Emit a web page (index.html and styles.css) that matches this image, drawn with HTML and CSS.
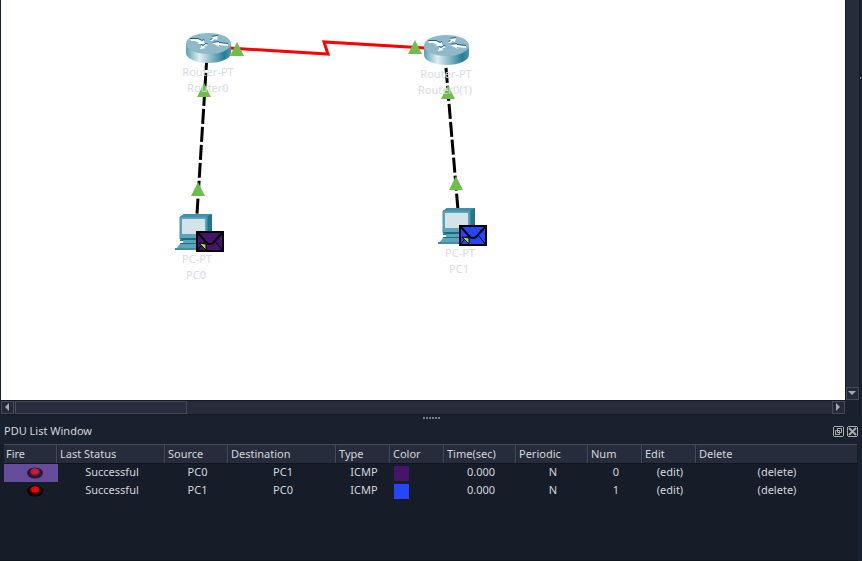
FILE: index.html
```html
<!DOCTYPE html>
<html lang="en">
<head>
<meta charset="utf-8">
<title>PDU List Window</title>
<link rel="stylesheet" href="styles.css">
</head>
<body>
<main class="workspace">
  <svg class="topology" role="img" aria-label="Network topology">
    <defs>
      <linearGradient id="side" x1="0" x2="1" y1="0" y2="0">
        <stop offset="0" stop-color="#58a0b5"/>
        <stop offset=".3" stop-color="#e2eef1"/>
        <stop offset=".5" stop-color="#9dc6d2"/>
        <stop offset=".85" stop-color="#257f98"/>
        <stop offset="1" stop-color="#4b96ac"/>
      </linearGradient>
      <g id="arrows">
        <path d="M4 6h8l4 2 2-1 1 4h-8l2-1-4-2H5z"/>
        <path d="M24 8l3-3-2-1 7-1-1 4-2-1-3 2z"/>
        <path d="M22 12l-4 2 2 1-6 1 1-4 2 1 3-2z"/>
        <path d="M42 13l-9-1 1 2-8-4 7-1v1l9 1z"/>
      </g>
      <g id="router">
        <path d="M0 10v10c0 5.500 10 10 22.500 10S45 25.500 45 20V10z" fill="url(#side)"/>
        <ellipse cx="22.500" cy="10.500" rx="22.500" ry="10.500" fill="#8fb9c9"/>
        <use href="#arrows" y="-1" fill="#0d627d"/>
        <use href="#arrows" fill="#fff"/>
      </g>
      <g id="pc">
        <path d="M5 3l4-3h28v23l-5 4H5z" fill="#21768f"/>
        <path d="M5 3l4-3h28l-5 3z" fill="#3f91a8"/>
        <path d="M5 3h27v22H5z" fill="#5fa5b9" stroke="#4a93a9" stroke-width="1"/>
        <rect x="7" y="5" width="23" height="15" rx="1" fill="#d4e3ea"/>
        <path d="M5 24h28v2H8z" fill="#146d87"/>
        <path d="M8 26h24v3H8z" fill="#5fa5b9"/>
        <path d="M5 29h28v2H5z" fill="#17718b"/>
        <path d="M5 30h28v6H0z" fill="#5fa5b9"/>
        <path d="M0 34h24v2H0z" fill="#438da4"/>
      </g>
      <g id="envelope">
        <rect x="1" y="1" width="26" height="19" stroke="#000" stroke-width="2"/>
        <path d="M1 1l10 11q3 2 6 0L27 1" fill="none" stroke="#000" stroke-width="2"/>
        <path d="M1 20l8-10M27 20l-8-10" fill="none" stroke="#000" stroke-width="1"/>
        <path d="M3 12l7 1v6z" fill="#b4d52b" stroke="#000" stroke-width="1"/>
      </g>
      <path id="link-up" d="M0 14L7 0l7 14z" fill="#6cbf4b"/>
    </defs>
    <path class="serial" d="M228 48l99 6-4-12 101 6"/>
    <path class="cross" d="M206 55L196 214"/>
    <path class="cross" d="M445 68L457 210"/>
    <use href="#router" x="185" y="33"/>
    <use href="#router" x="423" y="35"/>
    <use href="#pc" x="174" y="214"/>
    <use href="#pc" x="437" y="208"/>
    <use href="#link-up" x="229" y="42"/>
    <use href="#link-up" x="407" y="40"/>
    <use href="#link-up" x="196" y="83"/>
    <use href="#link-up" x="440" y="85"/>
    <use href="#link-up" x="190" y="182"/>
    <use href="#link-up" x="448" y="176"/>
    <use href="#envelope" x="195" y="231" fill="#46146b"/>
    <use href="#envelope" x="458" y="225" fill="#2446ff"/>
    <g class="labels">
      <text x="207" y="76">Router-PT</text><text x="207" y="92">Router0</text>
      <text x="445" y="78">Router-PT</text><text x="444" y="94">Router0(1)</text>
      <text x="196" y="263">PC-PT</text><text x="195" y="279">PC0</text>
      <text x="459" y="257">PC-PT</text><text x="458" y="273">PC1</text>
    </g>
  </svg>
  <div class="vbar">
    <button class="step" aria-label="Scroll down"><svg width="9" height="5"><path d="M0 0h8L4 4z"/></svg></button>
  </div>
  <div class="hbar">
    <button class="step" aria-label="Scroll left"><svg width="5" height="9"><path d="M4 0v8L0 4z"/></svg></button>
    <div class="thumb"></div>
    <button class="step" aria-label="Scroll right"><svg width="5" height="9"><path d="M0 0v8l4-4z"/></svg></button>
  </div>
  <div class="edge"><i></i></div>
</main>
<section class="dock">
  <div class="splitter"><i></i><i></i><i></i><i></i><i></i><i></i></div>
  <header class="title">
    <h1>PDU List Window</h1>
    <button class="tool" aria-label="Float window"><svg width="11" height="11"><path d="M1 .5h9M10.500 1v9M10 10.500H1M.5 10V1M4.500 2.500h4v4h-4zM2.500 4.500h4v4h-4z"/></svg></button>
    <button class="tool" aria-label="Close window"><svg width="11" height="11"><path d="M1 .5h9M10.500 1v9M10 10.500H1M.5 10V1"/><path class="cross-mark" d="M2 2l7 7M9 2l-7 7"/></svg></button>
  </header>
  <div class="list">
    <table>
      <colgroup><col class="w54"><col class="w108"><col class="w63"><col class="w108"><col class="w54"><col class="w54"><col class="w72"><col class="w72"><col class="w54"><col class="w54"><col></colgroup>
      <thead>
        <tr><th>Fire</th><th>Last Status</th><th>Source</th><th>Destination</th><th>Type</th><th>Color</th><th>Time(sec)</th><th>Periodic</th><th>Num</th><th>Edit</th><th>Delete</th></tr>
      </thead>
      <tbody>
        <tr>
          <td class="fire selected"><button aria-label="Fire PDU 0"><svg width="16" height="12"><ellipse cx="8" cy="6" rx="8" ry="5.500" fill="#2a1838"/><ellipse cx="8" cy="5" rx="5" ry="4" fill="#6d1a3c"/><ellipse cx="8" cy="4.500" rx="4" ry="3" fill="#c91c35"/></svg></button></td>
          <td>Successful</td><td>PC0</td><td>PC1</td><td>ICMP</td>
          <td class="color"><span class="swatch purple"></span></td>
          <td>0.000</td><td>N</td><td>0</td><td><button>(edit)</button></td><td><button>(delete)</button></td>
        </tr>
        <tr>
          <td class="fire"><button aria-label="Fire PDU 1"><svg width="16" height="12"><ellipse cx="8" cy="6" rx="8" ry="5.500" fill="#000"/><ellipse cx="8" cy="5" rx="5" ry="4" fill="#700000"/><ellipse cx="8" cy="4.500" rx="4" ry="3" fill="#f40000"/></svg></button></td>
          <td>Successful</td><td>PC1</td><td>PC0</td><td>ICMP</td>
          <td class="color"><span class="swatch blue"></span></td>
          <td>0.000</td><td>N</td><td>1</td><td><button>(edit)</button></td><td><button>(delete)</button></td>
        </tr>
      </tbody>
    </table>
  </div>
</section>
</body>
</html>
```
FILE: styles.css
```css
* {
  box-sizing: border-box;
}

body {
  margin: 0;
  height: 100vh;
  display: flex;
  flex-direction: column;
  background: #19202e;
  color: #d3d7dc;
  font: 11px/18px "Noto Sans", sans-serif;
}

button {
  padding: 0;
  border: 0;
  background: none;
  color: inherit;
  font: inherit;
}

svg {
  display: block;
}

.workspace {
  flex: 1;
  min-height: 0;
  display: grid;
  grid-template-columns: 1fr 14px 3px;
  grid-template-rows: 1fr 15px;
  padding-left: 1px;
}

.topology {
  width: 100%;
  height: 100%;
  background: #fff;
}

.serial {
  fill: none;
  stroke: #f00;
  stroke-width: 3;
}

.cross {
  stroke: #000;
  stroke-width: 3;
  stroke-dasharray: 15 3;
}

.labels {
  fill: #d6dbe4;
  text-anchor: middle;
}

.vbar {
  display: flex;
  align-items: flex-end;
  background: #262c39;
  border-left: 1px solid #131a26;
}

.hbar {
  grid-row: 2;
  grid-column: 1;
  display: flex;
  gap: 1px;
  background: #262c39;
  border: solid #131a26;
  border-width: 1px 0;
}

.step {
  flex: none;
  display: flex;
  align-items: center;
  justify-content: center;
  width: 13px;
  height: 13px;
  background: #232a39;
  border: 1px solid #454b58;
}

.step svg {
  fill: #a5a9b3;
}

.thumb {
  width: 172px;
  margin-right: auto;
  background: #282e3e;
  border: 1px solid #454b58;
}

.edge {
  grid-row: 1 / 3;
  grid-column: 3;
  border-left: 1px solid #131a26;
  padding-top: 77px;
}

.edge i {
  display: block;
  width: 1px;
  height: 2px;
  background: #8b8f98;
}

.dock {
  flex: none;
  display: flex;
  flex-direction: column;
}

.splitter {
  display: flex;
  justify-content: center;
  gap: 1px;
  padding-top: 2px;
  height: 5px;
}

.splitter i {
  width: 2px;
  height: 2px;
  background: #777c86;
}

.title {
  display: flex;
  align-items: center;
  gap: 3px;
  height: 22px;
  margin-bottom: 2px;
  padding: 0 4px;
}

.title h1 {
  flex: 1;
  margin: 0;
  font: inherit;
}

.tool svg {
  fill: none;
  stroke: #a9a9a6;
}

.tool .cross-mark {
  stroke-width: 2;
}

.list {
  min-height: 117px;
  padding: 0 1px 0 4px;
  margin-right: 4px;
  background: #161d29;
  border-bottom: 1px solid #0f151f;
}

table {
  width: 100%;
  table-layout: fixed;
  border-collapse: separate;
  border-spacing: 0;
}

.w54 {
  width: 54px;
}

.w63 {
  width: 63px;
}

.w72 {
  width: 72px;
}

.w108 {
  width: 108px;
}

th {
  height: 20px;
  padding: 0 0 0 2px;
  background: #262c3b;
  border-top: 1px solid #454b58;
  border-bottom: 1px solid #10151e;
  box-shadow: inset -1px 0 #202634, inset -2px 0 #454b58;
  font-weight: 400;
  text-align: left;
  line-height: 18px;
}

th:last-child {
  box-shadow: none;
}

td {
  height: 18px;
  padding: 0;
  text-align: center;
  line-height: 16px;
  vertical-align: top;
}

.fire {
  padding: 3px 0 0 8px;
}

.fire button {
  display: block;
  margin: 0 auto;
}

.selected {
  background: #654d9c;
}

.color {
  padding: 2px 0 0 3px;
}

.swatch {
  display: block;
  width: 15px;
  height: 15px;
}

.purple {
  background: #46146b;
}

.blue {
  background: #2446ff;
}
```
